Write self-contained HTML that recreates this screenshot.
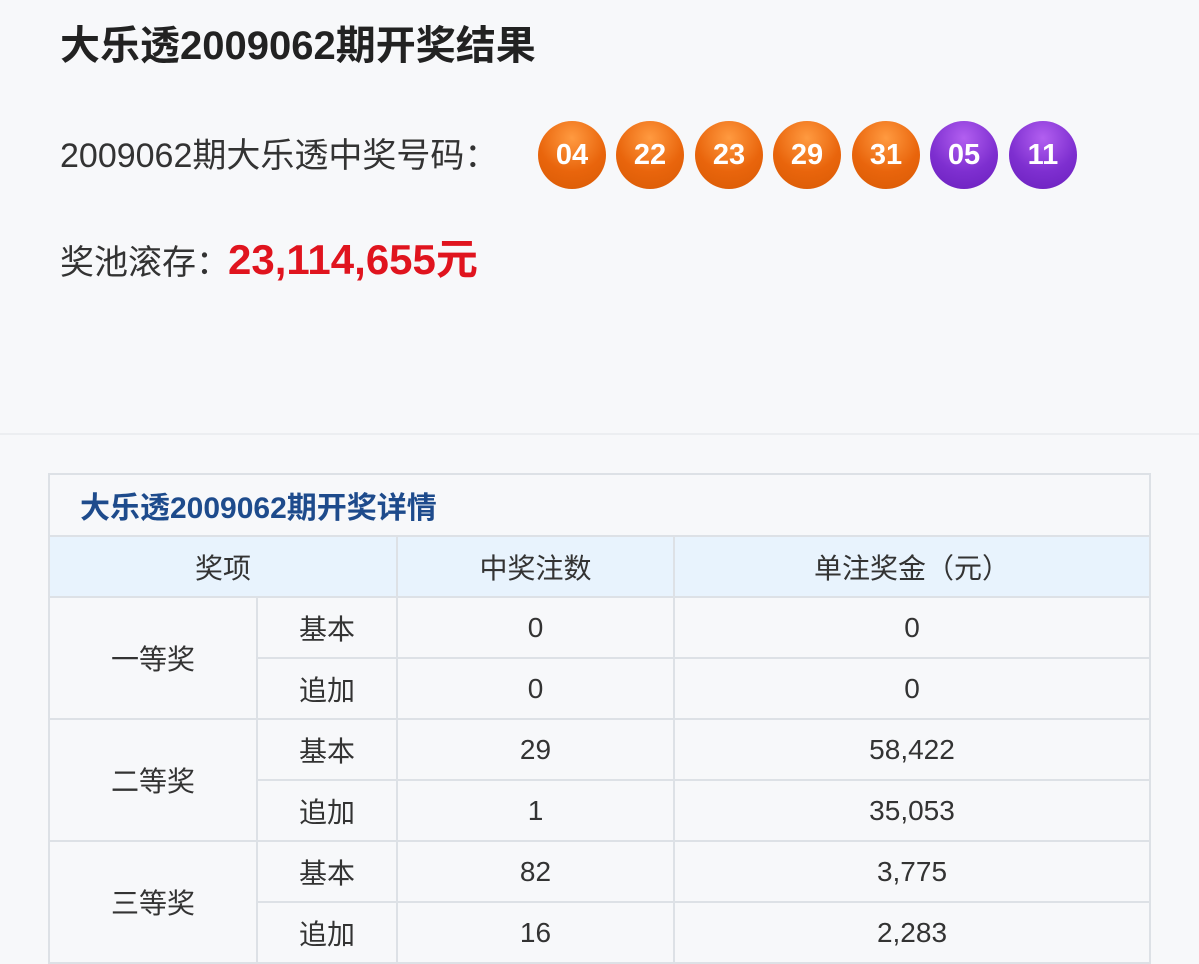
<!DOCTYPE html>
<html><head><meta charset="utf-8"><style>
*{margin:0;padding:0;box-sizing:border-box}
body{width:1199px;height:962px;overflow:hidden;background:#f7f8fa;font-family:"Liberation Sans","Noto Sans CJK SC",sans-serif;color:#222;position:relative}
.t{position:absolute;left:60px;top:13px;font-size:40px;font-weight:bold;color:#222;white-space:nowrap}
.l{position:absolute;left:60px;font-size:34px;color:#333;white-space:nowrap}
.ball{position:absolute;top:121px;width:68px;height:68px;border-radius:50%;color:#fff;font-weight:bold;font-size:29px;display:flex;align-items:center;justify-content:center;font-family:"Liberation Sans",sans-serif}
.o{background:radial-gradient(circle at 50% 25%,#ff9a40,#e9650c 55%,#d85a05)}
.p{background:radial-gradient(circle at 50% 25%,#b25ff0,#7e2fd0 55%,#6a1fbd)}
.sep{position:absolute;left:0;right:0;top:433px;height:2px;background:#eceef1}
table{position:absolute;left:48px;top:473px;width:1103px;border-collapse:collapse;font-size:28px;color:#333}
td,th{border:2px solid #dde1e6;text-align:center;height:61px;font-weight:normal}
.cap{text-align:left;padding-left:30px;color:#1e4b8c;font-weight:bold;font-size:30px;height:62px}
.h td{background:#e8f3fd}
</style></head><body>
<div class="t">大乐透2009062期开奖结果</div>
<div class="l" style="top:128px">2009062期大乐透中奖号码：</div>
<div class="ball o" style="left:538px">04</div>
<div class="ball o" style="left:616px">22</div>
<div class="ball o" style="left:695px">23</div>
<div class="ball o" style="left:773px">29</div>
<div class="ball o" style="left:852px">31</div>
<div class="ball p" style="left:930px">05</div>
<div class="ball p" style="left:1009px">11</div>
<div class="l" style="top:226px">奖池滚存：<span style="color:#e0141e;font-weight:bold;font-size:42px;position:relative;left:-2px">23,114,655元</span></div>
<div class="sep"></div>
<table>
<tr><td class="cap" colspan="4">大乐透2009062期开奖详情</td></tr>
<tr class="h"><td colspan="2" style="width:348px">奖项</td><td style="width:277px">中奖注数</td><td>单注奖金（元）</td></tr>
<tr><td rowspan="2" style="width:208px">一等奖</td><td style="width:140px">基本</td><td>0</td><td>0</td></tr>
<tr><td>追加</td><td>0</td><td>0</td></tr>
<tr><td rowspan="2">二等奖</td><td>基本</td><td>29</td><td>58,422</td></tr>
<tr><td>追加</td><td>1</td><td>35,053</td></tr>
<tr><td rowspan="2">三等奖</td><td>基本</td><td>82</td><td>3,775</td></tr>
<tr><td>追加</td><td>16</td><td>2,283</td></tr>
</table>
</body></html>
